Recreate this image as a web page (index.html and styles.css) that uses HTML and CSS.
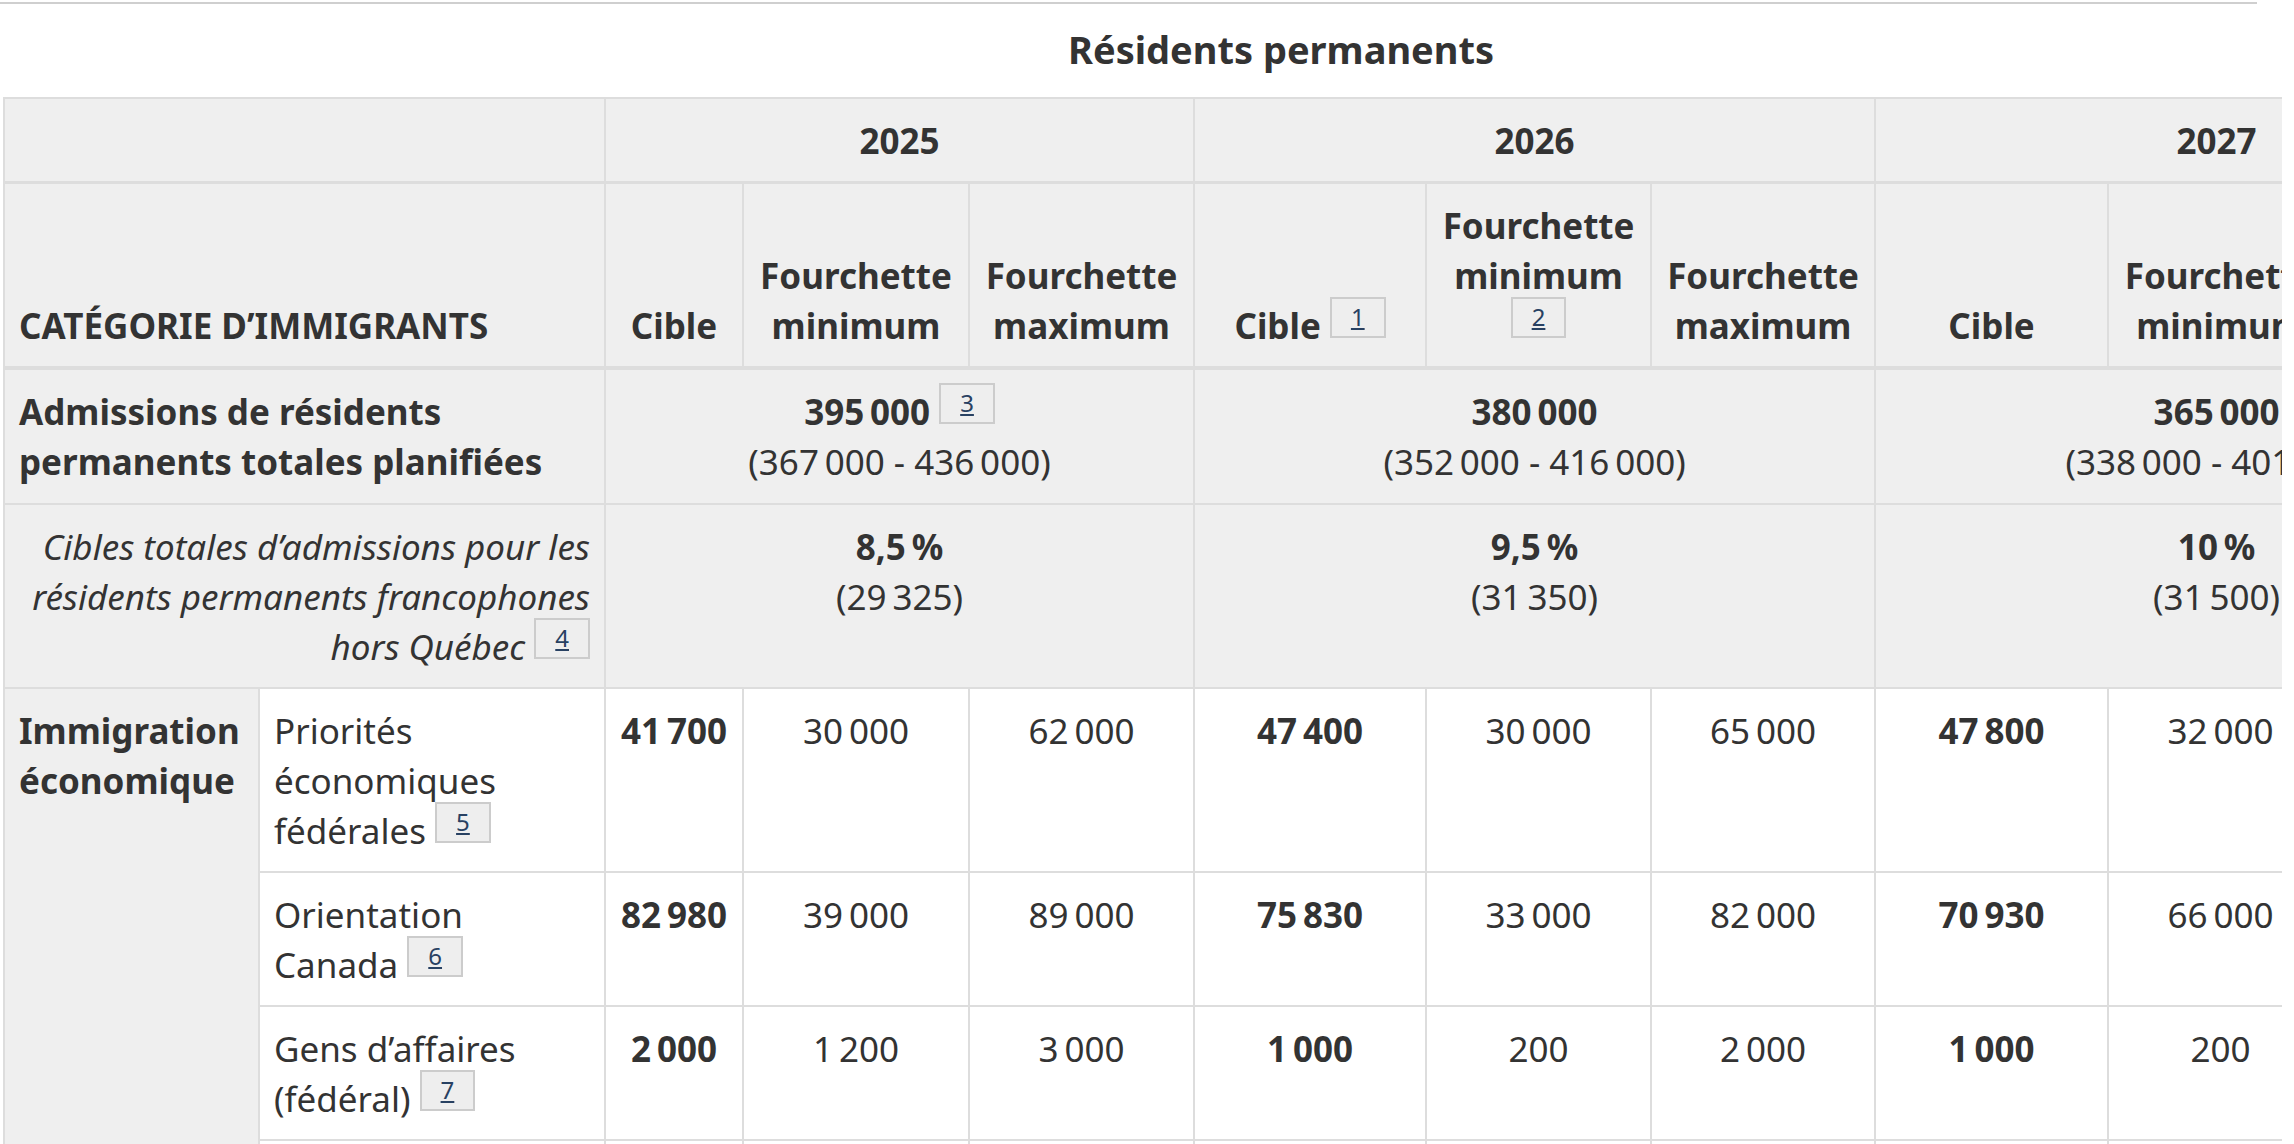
FILE: index.html
```html
<!DOCTYPE html>
<html lang="fr">
<head>
<meta charset="utf-8">
<title>Résidents permanents</title>
<link rel="stylesheet" href="styles.css">
</head>
<body>
<div class="topline"></div>
<div class="scroller">
  <table class="levels">
    <caption>Résidents permanents</caption>
    <colgroup>
      <col class="col-cat">
      <col class="col-sub">
      <col class="col-t25">
      <col class="col-r226">
      <col class="col-r225">
      <col class="col-t26">
      <col class="col-r225">
      <col class="col-r224">
      <col class="col-t27">
      <col class="col-r225">
      <col class="col-r225">
    </colgroup>
    <thead>
      <tr class="years">
        <th colspan="2"></th>
        <th colspan="3">2025</th>
        <th colspan="3">2026</th>
        <th colspan="3">2027</th>
      </tr>
      <tr class="heads">
        <th colspan="2" class="cat">CATÉGORIE D’IMMIGRANTS</th>
        <th>Cible</th>
        <th>Fourchette minimum</th>
        <th>Fourchette maximum</th>
        <th>Cible <sup class="fn"><a href="#fn1">1</a></sup></th>
        <th>Fourchette minimum <sup class="fn"><a href="#fn2">2</a></sup></th>
        <th>Fourchette maximum</th>
        <th>Cible</th>
        <th>Fourchette minimum</th>
        <th>Fourchette maximum</th>
      </tr>
    </thead>
    <tbody class="totals">
      <tr class="overall">
        <th colspan="2" class="cat">Admissions de résidents permanents totales planifiées</th>
        <td colspan="3"><strong>395&#8239;000</strong> <sup class="fn"><a href="#fn3">3</a></sup><br>(367&#8239;000 - 436&#8239;000)</td>
        <td colspan="3"><strong>380&#8239;000</strong><br>(352&#8239;000 - 416&#8239;000)</td>
        <td colspan="3"><strong>365&#8239;000</strong><br>(338&#8239;000 - 401&#8239;000)</td>
      </tr>
      <tr class="franco">
        <th colspan="2">Cibles totales d’admissions pour les résidents permanents francophones hors Québec <sup class="fn"><a href="#fn4">4</a></sup></th>
        <td colspan="3"><strong>8,5&#8239;%</strong><br>(29&#8239;325)</td>
        <td colspan="3"><strong>9,5&#8239;%</strong><br>(31&#8239;350)</td>
        <td colspan="3"><strong>10&#8239;%</strong><br>(31&#8239;500)</td>
      </tr>
    </tbody>
    <tbody class="body">
      <tr>
        <th rowspan="6" class="cat">Immigration économique</th>
        <td class="sub">Priorités économiques fédérales <sup class="fn"><a href="#fn5">5</a></sup></td>
        <td class="target">41&#8239;700</td><td>30&#8239;000</td><td>62&#8239;000</td>
        <td class="target">47&#8239;400</td><td>30&#8239;000</td><td>65&#8239;000</td>
        <td class="target">47&#8239;800</td><td>32&#8239;000</td><td>65&#8239;000</td>
      </tr>
      <tr>
        <td class="sub">Orientation Canada <sup class="fn"><a href="#fn6">6</a></sup></td>
        <td class="target">82&#8239;980</td><td>39&#8239;000</td><td>89&#8239;000</td>
        <td class="target">75&#8239;830</td><td>33&#8239;000</td><td>82&#8239;000</td>
        <td class="target">70&#8239;930</td><td>66&#8239;000</td><td>78&#8239;000</td>
      </tr>
      <tr>
        <td class="sub">Gens d’affaires (fédéral) <sup class="fn"><a href="#fn7">7</a></sup></td>
        <td class="target">2&#8239;000</td><td>1&#8239;200</td><td>3&#8239;000</td>
        <td class="target">1&#8239;000</td><td>200</td><td>2&#8239;000</td>
        <td class="target">1&#8239;000</td><td>200</td><td>2&#8239;000</td>
      </tr>
      <tr>
        <td class="sub">Programmes économiques régionaux</td>
        <td class="target">14&#8239;950</td><td>10&#8239;000</td><td>21&#8239;000</td>
        <td class="target">15&#8239;150</td><td>11&#8239;000</td><td>20&#8239;000</td>
        <td class="target">15&#8239;150</td><td>11&#8239;000</td><td>20&#8239;000</td>
      </tr>
      <tr>
        <td class="sub">Programme des candidats des provinces</td>
        <td class="target">55&#8239;000</td><td>37&#8239;000</td><td>70&#8239;000</td>
        <td class="target">55&#8239;000</td><td>37&#8239;000</td><td>70&#8239;000</td>
        <td class="target">55&#8239;000</td><td>37&#8239;000</td><td>70&#8239;000</td>
      </tr>
      <tr>
        <td class="sub">Total économique</td>
        <td class="target">232&#8239;150</td><td>215&#8239;000</td><td>256&#8239;000</td>
        <td class="target">229&#8239;750</td><td>206&#8239;000</td><td>249&#8239;000</td>
        <td class="target">225&#8239;350</td><td>206&#8239;000</td><td>240&#8239;000</td>
      </tr>
    </tbody>
  </table>
</div>
</body>
</html>
```

FILE: styles.css
```css
html, body {
  margin: 0;
  padding: 0;
  background: #fff;
}

body {
  font-family: "Noto Sans", "Open Sans", sans-serif;
  font-size: 35px;
  line-height: 50px;
  color: #333;
}

.topline {
  margin-top: 2px;
  height: 0;
  width: 2257px;
  border-top: 2px solid #cfcfcf;
}

.scroller {
  width: 2279px;
  padding-left: 3px;
  overflow: hidden;
}

.levels {
  border-collapse: collapse;
  table-layout: fixed;
  width: 2554px;
}

.levels caption {
  font-size: 38px;
  font-weight: 700;
  text-align: center;
  padding: 20px 0 23px;
}

.col-cat { width: 255px; }
.col-sub { width: 346px; }
.col-t25 { width: 138px; }
.col-r226 { width: 226px; }
.col-r225 { width: 225px; }
.col-r224 { width: 224px; }
.col-t26 { width: 232px; }
.col-t27 { width: 233px; }

.levels th,
.levels td {
  border: 2px solid #dddddd;
  padding: 17px 14px 15px;
  vertical-align: top;
  text-align: center;
  font-weight: 400;
  background: #fff;
}

.levels th {
  font-weight: 700;
  background: #efefef;
}

.levels thead th {
  vertical-align: bottom;
  border-bottom-width: 3px;
}

.levels .heads th {
  border-bottom-width: 4px;
}

.levels .years th {
  vertical-align: middle;
}

.levels .overall th,
.levels .overall td {
  padding-bottom: 16px;
}

.levels .cat {
  text-align: left;
}

.levels .totals td {
  background: #efefef;
}

.levels .franco th {
  font-style: italic;
  font-weight: 400;
  text-align: right;
}

.levels .sub {
  text-align: left;
}

.levels .target {
  font-weight: 700;
}

.levels strong {
  font-weight: 700;
}

.fn {
  vertical-align: super;
  font-size: 24px;
  line-height: 0;
  font-weight: 400;
  font-style: normal;
}

.fn a {
  color: #284162;
  text-decoration: underline;
  background: #eeeeee;
  border: 2px solid #cccccc;
  padding: 1px 19px 3px;
  white-space: nowrap;
}
```
